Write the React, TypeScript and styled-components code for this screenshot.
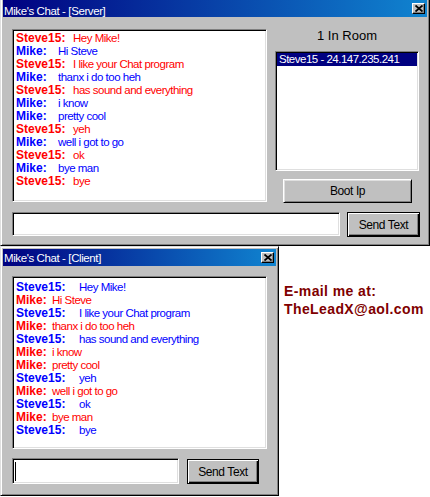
import React from "react";
import styled, { createGlobalStyle } from "styled-components";

const Global = createGlobalStyle`
  html, body { margin: 0; padding: 0; background: #ffffff; }
  body {
    width: 430px; height: 497px; overflow: hidden;
    font-family: "Liberation Sans", Arial, sans-serif;
  }
  * { box-sizing: border-box; }
`;

const Page = styled.div`
  width: 430px;
  height: 497px;
  overflow: hidden;
  display: flex;
  flex-direction: column;
`;

const Window = styled.div<{ $w: number; $cropTop?: number }>`
  width: ${(p) => p.$w}px;
  flex-shrink: 0;
  margin-top: ${(p) => -(p.$cropTop ?? 0)}px;
  background: #c0c0c0;
  border: 1px solid;
  border-color: #dfdfdf #000000 #000000 #dfdfdf;
  box-shadow: inset 1px 1px #ffffff, inset -1px -1px #808080;
  padding: 2px;
`;

const TitleBar = styled.div<{ $textTop: number }>`
  height: 17px;
  display: flex;
  align-items: flex-start;
  justify-content: space-between;
  padding: 0 2px 0 1px;
  background: linear-gradient(90deg, #000080 0%, #1084d0 100%);
  color: #ffffff;
  font-size: 11.5px;
  line-height: 12px;
  & > span { margin-top: ${(p) => p.$textTop}px; letter-spacing: -0.4px; white-space: nowrap; }
`;

const CloseBox = styled.div`
  width: 13px;
  height: 11px;
  margin-top: 3px;
  background: #c0c0c0;
  border: 1px solid;
  border-color: #ffffff #000000 #000000 #ffffff;
  box-shadow: inset -1px -1px #808080;
  display: flex;
  align-items: center;
  justify-content: center;
`;

const Body = styled.div<{ $pt: number; $pb: number; $pl: number; $pr: number }>`
  padding: ${(p) => p.$pt}px ${(p) => p.$pr}px ${(p) => p.$pb}px ${(p) => p.$pl}px;
  display: flex;
  flex-direction: column;
  gap: 9px;
`;

const Row = styled.div<{ $gap: number }>`
  display: flex;
  align-items: flex-start;
  gap: ${(p) => p.$gap}px;
`;

const ChatBox = styled.div<{ $pt: number; $pl: number }>`
  width: 255px;
  height: 173px;
  flex-shrink: 0;
  background: #ffffff;
  border: 1px solid;
  border-color: #808080 #ffffff #ffffff #808080;
  box-shadow: inset 1px 1px #000000, inset -1px -1px #dfdfdf;
  padding: ${(p) => p.$pt}px 2px 0 ${(p) => p.$pl}px;
  overflow: hidden;
`;

const Line = styled.div`
  height: 13px;
  line-height: 13px;
  white-space: nowrap;
  font-size: 11.5px;
`;

const Name = styled.span<{ $color: string; $w: number }>`
  display: inline-block;
  width: ${(p) => p.$w}px;
  font-weight: bold;
  font-size: 12px;
  color: ${(p) => p.$color};
`;

const Msg = styled.span<{ $color: string }>`
  color: ${(p) => p.$color};
  letter-spacing: -0.5px;
`;

const SideColumn = styled.div`
  width: 145px;
  height: 174px;
  display: flex;
  flex-direction: column;
  align-items: flex-start;
`;

const RoomLabel = styled.div`
  width: 144px;
  height: 22px;
  text-align: center;
  font-size: 13px;
  line-height: 13px;
  color: #000000;
`;

const ListBox = styled.div`
  width: 144px;
  height: 120px;
  background: #ffffff;
  border: 1px solid;
  border-color: #808080 #ffffff #ffffff #808080;
  box-shadow: inset 1px 1px #000000, inset -1px -1px #dfdfdf;
  padding: 1px;
`;

const ListItem = styled.div<{ $selected?: boolean }>`
  height: 13px;
  line-height: 13px;
  padding-left: 2px;
  font-size: 11.5px;
  letter-spacing: -0.5px;
  white-space: nowrap;
  background: ${(p) => (p.$selected ? "#000080" : "transparent")};
  color: ${(p) => (p.$selected ? "#ffffff" : "#000000")};
`;

const Button = styled.div<{ $w: number; $h: number; $default?: boolean; $mt?: number }>`
  width: ${(p) => p.$w}px;
  height: ${(p) => p.$h}px;
  margin-top: ${(p) => p.$mt ?? 0}px;
  flex-shrink: 0;
  background: #c0c0c0;
  display: flex;
  align-items: center;
  justify-content: center;
  font-size: 12px;
  letter-spacing: -0.4px;
  color: #000000;
  border: 1px solid;
  border-color: ${(p) => (p.$default ? "#000000" : "#ffffff #000000 #000000 #ffffff")};
  box-shadow: ${(p) =>
    p.$default
      ? "inset 1px 1px #ffffff, inset -1px -1px #000000, inset -2px -2px #808080"
      : "inset 1px 1px #dfdfdf, inset -1px -1px #808080"};
`;

const BootButton = styled(Button)`
  margin-top: 8px;
  align-self: center;
`;

const TextBox = styled.div<{ $w: number; $h: number }>`
  width: ${(p) => p.$w}px;
  height: ${(p) => p.$h}px;
  flex-shrink: 0;
  background: #ffffff;
  border: 1px solid;
  border-color: #808080 #ffffff #ffffff #808080;
  box-shadow: inset 1px 1px #000000, inset -1px -1px #dfdfdf;
  padding: 3px 0 0 2px;
`;

const Caret = styled.div`
  width: 1px;
  height: 19px;
  background: #000000;
`;

const Email = styled.div`
  margin: 36px 0 0 5px;
  color: #800000;
  font-weight: bold;
  font-size: 14px;
  line-height: 18px;
  letter-spacing: 0.4px;
  white-space: nowrap;
`;

const BottomArea = styled.div`
  display: flex;
  align-items: flex-start;
`;

type Msg = { who: "Steve15" | "Mike"; text: string };

const messages: Msg[] = [
  { who: "Steve15", text: "Hey Mike!" },
  { who: "Mike", text: "Hi Steve" },
  { who: "Steve15", text: "I like your Chat program" },
  { who: "Mike", text: "thanx i do too heh" },
  { who: "Steve15", text: "has sound and everything" },
  { who: "Mike", text: "i know" },
  { who: "Mike", text: "pretty cool" },
  { who: "Steve15", text: "yeh" },
  { who: "Mike", text: "well i got to go" },
  { who: "Steve15", text: "ok" },
  { who: "Mike", text: "bye man" },
  { who: "Steve15", text: "bye" },
];

const RED = "#ff0000";
const BLUE = "#0000ff";

const CloseIcon = () => (
  <svg width="8" height="7" viewBox="0 0 8 7">
    <path d="M0.5 0.5 L7.5 6.5 M7.5 0.5 L0.5 6.5" stroke="#000" strokeWidth="1.8" fill="none" />
  </svg>
);

const Title: React.FC<{ text: string; textTop: number }> = ({ text, textTop }) => (
  <TitleBar $textTop={textTop}>
    <span>{text}</span>
    <CloseBox>
      <CloseIcon />
    </CloseBox>
  </TitleBar>
);

const ChatLines: React.FC<{
  steveColor: string;
  mikeColor: string;
  steveW: number;
  mikeW: number;
}> = ({ steveColor, mikeColor, steveW, mikeW }) => (
  <>
    {messages.map((m, i) => {
      const c = m.who === "Steve15" ? steveColor : mikeColor;
      const w = m.who === "Steve15" ? steveW : mikeW;
      return (
        <Line key={i}>
          <Name $color={c} $w={w}>{m.who}:</Name>
          <Msg $color={c}>{m.text}</Msg>
        </Line>
      );
    })}
  </>
);

export default function App() {
  return (
    <Page>
      <Global />
      <Window $w={430} $cropTop={3}>
        <Title text="Mike's Chat - [Server]" textTop={5} />
        <Body $pt={12} $pb={6} $pl={9} $pr={7}>
          <Row $gap={8}>
            <ChatBox $pt={2} $pl={3}>
              <ChatLines steveColor={RED} mikeColor={BLUE} steveW={57} mikeW={42} />
            </ChatBox>
            <SideColumn>
              <RoomLabel>1 In Room</RoomLabel>
              <ListBox>
                <ListItem $selected>Steve15 - 24.147.235.241</ListItem>
              </ListBox>
              <BootButton $w={129} $h={24}>Boot Ip</BootButton>
            </SideColumn>
          </Row>
          <Row $gap={7}>
            <TextBox $w={328} $h={24} />
            <Button $w={73} $h={25} $default>Send Text</Button>
          </Row>
        </Body>
      </Window>
      <BottomArea>
        <Window $w={279}>
          <Title text="Mike's Chat - [Client]" textTop={3} />
          <Body $pt={10} $pb={9} $pl={9} $pr={9}>
            <ChatBox $pt={4} $pl={3}>
              <ChatLines steveColor={BLUE} mikeColor={RED} steveW={63} mikeW={36} />
            </ChatBox>
            <Row $gap={8}>
              <TextBox $w={167} $h={26}>
                <Caret />
              </TextBox>
              <Button $w={72} $h={25} $mt={1} $default>Send Text</Button>
            </Row>
          </Body>
        </Window>
        <Email>
          E-mail me at:
          <br />
          TheLeadX@aol.com
        </Email>
      </BottomArea>
    </Page>
  );
}
